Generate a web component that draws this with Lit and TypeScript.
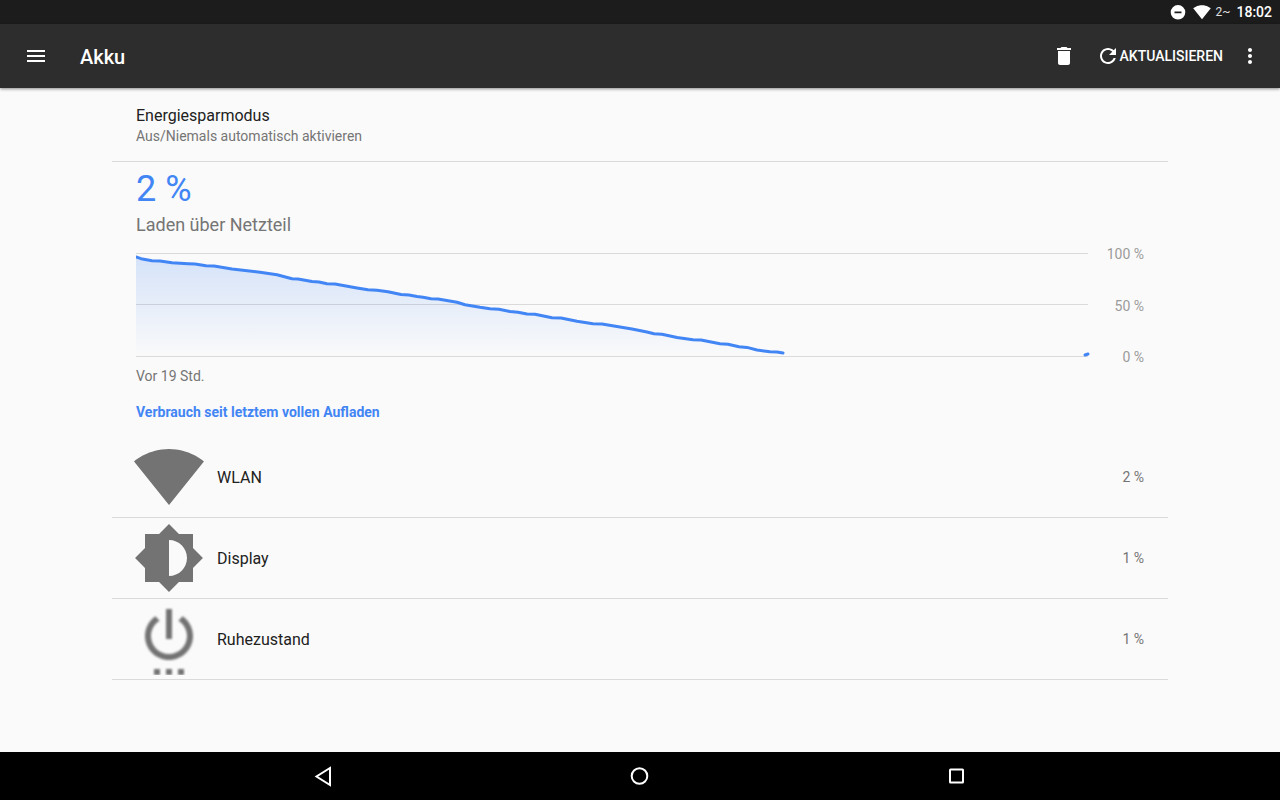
import { LitElement, html, css, svg } from "lit";
import { customElement } from "lit/decorators.js";

type Point = [number, number];

const LEVELS: Point[] = [
  [0, 4], [5, 5.7], [16, 7.7], [24, 8], [36, 9.7], [52, 10.7], [59, 11], [70, 12.7], [78, 13],
  [96, 16], [124, 19.3], [141, 21.7], [156, 25.7], [162, 26], [176, 28.5], [183, 29], [191, 30.7],
  [199, 31], [221, 35], [232, 36.8], [241, 37.3], [252, 38.7], [265, 41.5], [273, 42], [281, 43.5],
  [287, 44.2], [295, 45.7], [302, 46], [321, 49.3], [329, 51.7], [344, 54.3], [354, 55.7],
  [363, 56.3], [374, 58.5], [382, 59.2], [391, 61], [399, 61.3], [416, 64.7], [425, 65],
  [441, 68.3], [457, 70.7], [466, 71], [496, 76], [511, 79], [518, 80.7], [526, 81.3],
  [541, 84.5], [557, 86.7], [565, 87], [584, 90.7], [592, 91.2], [603, 93.7], [611, 94.4],
  [621, 97], [634, 98.7], [641, 99], [647, 100],
];
const CHARGING: Point[] = [[949, 102], [952, 101]];

const toPath = (points: Point[]) => "M" + points.map((p) => p.join(" ")).join("L");
const LEVEL_LINE = toPath(LEVELS);
const LEVEL_AREA = `${LEVEL_LINE}V103H0Z`;

const WIFI =
  "M12.01 21.33L23.64 6.8c-.45-.34-4.93-4.1-11.64-4.1C5.28 2.7 .81 6.46.36 6.8l11.63 14.53.01.01.01-.01z";
const BRIGHTNESS =
  "M20 15.31L23.31 12 20 8.69V4h-4.69L12 .69 8.69 4H4v4.69L.69 12 4 15.31V20h4.69L12 23.31 15.31 20H20v-4.69zM12 18V6c3.31 0 6 2.69 6 6s-2.69 6-6 6z";
const POWER =
  "M7 24h2v-2H7v2zm4 0h2v-2h-2v2zm2-22h-2v10h2V2zm3.56 2.44l-1.45 1.45C16.84 6.94 18 8.83 18 11c0 3.31-2.69 6-6 6s-6-2.69-6-6c0-2.17 1.16-4.06 2.88-5.12L7.44 4.44C5.36 5.88 4 8.28 4 11c0 4.42 3.58 8 8 8s8-3.58 8-8c0-2.72-1.36-5.12-3.44-6.56zM15 24h2v-2h-2v2z";
const MENU = "M3 18h18v-2H3v2zm0-5h18v-2H3v2zm0-7v2h18V6H3z";
const TRASH = "M6 19c0 1.1.9 2 2 2h8c1.1 0 2-.9 2-2V7H6v12zM19 4h-3.5l-1-1h-5l-1 1H5v2h14V4z";
const REFRESH =
  "M17.65 6.35C16.2 4.9 14.21 4 12 4c-4.42 0-7.99 3.58-7.99 8s3.57 8 7.99 8c3.73 0 6.84-2.55 7.73-6h-2.08c-.82 2.33-3.04 4-5.65 4-3.31 0-6-2.69-6-6s2.69-6 6-6c1.66 0 3.14.69 4.22 1.78L13 11h7V4l-2.35 2.35z";
const MORE =
  "M12 8c1.1 0 2-.9 2-2s-.9-2-2-2-2 .9-2 2 .9 2 2 2zm0 2c-1.1 0-2 .9-2 2s.9 2 2 2 2-.9 2-2-.9-2-2-2zm0 6c-1.1 0-2 .9-2 2s.9 2 2 2 2-.9 2-2-.9-2-2-2z";

const CONSUMERS = [
  { name: "WLAN", share: "2 %", icon: WIFI, cls: "app-icon" },
  { name: "Display", share: "1 %", icon: BRIGHTNESS, cls: "app-icon" },
  { name: "Ruhezustand", share: "1 %", icon: POWER, cls: "app-icon lowres" },
];

const icon = (d: string, cls = "icon") =>
  html`<svg class=${cls} viewBox="0 0 24 24" aria-hidden="true"><path d=${d}></path></svg>`;

@customElement("app-root")
export class AppRoot extends LitElement {
  static styles = css`
    :host {
      display: flex;
      flex-direction: column;
      min-height: 100vh;
      background: #fafafa;
      color: #212121;
      font-family: Roboto, "Noto Sans", sans-serif;
      font-size: 14px;
      line-height: 20px;
    }
    *, *::before { box-sizing: border-box; }
    svg { display: block; fill: currentColor; flex: none; }
    button {
      appearance: none;
      border: 0;
      margin: 0;
      padding: 0;
      background: none;
      color: inherit;
      font: inherit;
      text-align: left;
      display: flex;
      align-items: center;
    }
    h1, h2, p, ul { margin: 0; padding: 0; font-weight: 400; }
    ul { list-style: none; }

    .status {
      display: flex;
      align-items: center;
      justify-content: flex-end;
      height: 24px;
      padding-right: 8px;
      background: #1c1c1c;
      color: #fff;
    }
    .dnd { width: 16px; height: 16px; margin-right: 6px; }
    .signal { width: 20px; height: 18px; margin-right: 4px; }
    .extra { font-size: 12px; margin-right: 6px; color: #e0e0e0; }
    .clock { font-weight: 500; }

    .toolbar {
      display: flex;
      align-items: center;
      height: 64px;
      padding: 0 18px 0 24px;
      background: #2d2d2d;
      color: #fff;
      box-shadow: 0 1px 3px rgba(0, 0, 0, 0.45);
    }
    .icon { width: 24px; height: 24px; }
    .title { flex: 1; margin-left: 32px; font-size: 20px; font-weight: 500; line-height: 24px; padding-top: 2px; }
    .trash { margin-right: 20px; }
    .refresh { font-weight: 500; margin-right: 15px; }

    main { flex: 1; padding: 0 112px; }
    .saver {
      width: 100%;
      padding: 17px 24px 15px;
      display: block;
      border-bottom: 1px solid #dadada;
      color: #757575;
    }
    .label { display: block; font-size: 16px; line-height: 24px; color: #212121; }
    .saver .label { line-height: 22px; }
    .sub { display: block; line-height: 19px; }
    .summary { padding: 7px 24px 0; }
    .level { font-size: 36px; line-height: 40px; color: #4285f4; }
    .state { font-size: 18px; line-height: 24px; padding-top: 4px; color: #757575; }
    .history { display: flex; margin-top: 16px; }
    .plot { flex: 1; min-width: 0; height: 104px; overflow: visible; fill: none; }
    .grid { stroke: #dadada; stroke-width: 1; }
    .line { stroke: #4285f4; stroke-width: 3; stroke-linejoin: round; stroke-linecap: round; }
    .scale {
      width: 56px;
      margin: -9px 0 -10px;
      display: flex;
      flex-direction: column;
      justify-content: space-between;
      text-align: right;
      color: #9a9a9a;
    }
    .since { margin-top: 9px; color: #757575; }
    .heading { font-size: 14px; font-weight: 700; color: #4285f4; padding: 16px 24px 15px; }

    .row {
      width: 100%;
      height: 81px;
      padding: 0 24px 0 21px;
      gap: 12px;
      border-bottom: 1px solid #dadada;
    }
    .app-icon { width: 72px; height: 72px; color: #737373; }
    .lowres path { filter: blur(0.3px); }
    .row .label { flex: 1; padding-top: 2px; }
    .share { color: #757575; }

    .nav { display: flex; height: 48px; padding: 0 165px 0 164px; background: #000; color: #fff; }
    .nav button { flex: 1; justify-content: center; }
    .nav svg { width: 25px; height: 25px; fill: none; stroke: currentColor; stroke-width: 2; }
  `;

  render() {
    return html`
      <div class="status">
        <svg class="dnd" viewBox="0 0 16 16" aria-hidden="true">
          <path fill-rule="evenodd" d="M8 1a7.3 7.3 0 1 0 0 14.6A7.3 7.3 0 0 0 8 1zM4.5 7.4h7v1.8h-7z"></path>
        </svg>
        <svg class="signal" viewBox="0 0 20 18" aria-hidden="true">
          <path d="M10 16.3L18.8 5.2C18.3 4.9 15 2.2 10 2.2S1.7 4.9 1.2 5.2z"></path>
        </svg>
        <span class="extra">2~</span>
        <span class="clock">18:02</span>
      </div>
      <header class="toolbar">
        <button aria-label="Menü">${icon(MENU)}</button>
        <h1 class="title">Akku</h1>
        <button class="trash" aria-label="Löschen">${icon(TRASH)}</button>
        <button class="refresh">${icon(REFRESH)}AKTUALISIEREN</button>
        <button aria-label="Weitere Optionen">${icon(MORE)}</button>
      </header>
      <main>
        <button class="saver">
          <span class="label">Energiesparmodus</span>
          <span class="sub">Aus/Niemals automatisch aktivieren</span>
        </button>
        <section class="summary">
          <p class="level">2 %</p>
          <p class="state">Laden über Netzteil</p>
          <div class="history">
            <svg class="plot" viewBox="0 0 952 104" preserveAspectRatio="none" role="img" aria-label="Akkuverlauf">
              <defs>
                <linearGradient id="fade" gradientUnits="userSpaceOnUse" x1="0" y1="0" x2="0" y2="104">
                  <stop offset="0" stop-color="#4285f4" stop-opacity="0.21"></stop>
                  <stop offset="1" stop-color="#4285f4" stop-opacity="0"></stop>
                </linearGradient>
                <clipPath id="frame"><rect x="0" y="-4" width="960" height="112"></rect></clipPath>
              </defs>
              ${[0.5, 51.5, 103.5].map((y) => svg`<path class="grid" d=${`M0 ${y}H952`}></path>`)}
              <g clip-path="url(#frame)">
                <path d=${LEVEL_AREA} fill="url(#fade)"></path>
                <path class="line" d=${LEVEL_LINE}></path>
                <path class="line" d=${toPath(CHARGING)}></path>
              </g>
            </svg>
            <div class="scale"><span>100 %</span><span>50 %</span><span>0 %</span></div>
          </div>
          <p class="since">Vor 19 Std.</p>
        </section>
        <h2 class="heading">Verbrauch seit letztem vollen Aufladen</h2>
        <ul>
          ${CONSUMERS.map(
            (c) => html`<li>
              <button class="row">
                ${icon(c.icon, c.cls)}
                <span class="label">${c.name}</span>
                <span class="share">${c.share}</span>
              </button>
            </li>`
          )}
        </ul>
      </main>
      <nav class="nav">
        <button aria-label="Zurück">
          <svg viewBox="0 0 25 25"><path d="M20 4v17L6.5 12.5z"></path></svg>
        </button>
        <button aria-label="Startseite">
          <svg viewBox="0 0 25 25"><circle cx="12.5" cy="12" r="7.8"></circle></svg>
        </button>
        <button aria-label="Letzte Apps">
          <svg viewBox="0 0 25 25"><rect x="6" y="5.5" width="13" height="13" rx="0.5"></rect></svg>
        </button>
      </nav>
    `;
  }
}
